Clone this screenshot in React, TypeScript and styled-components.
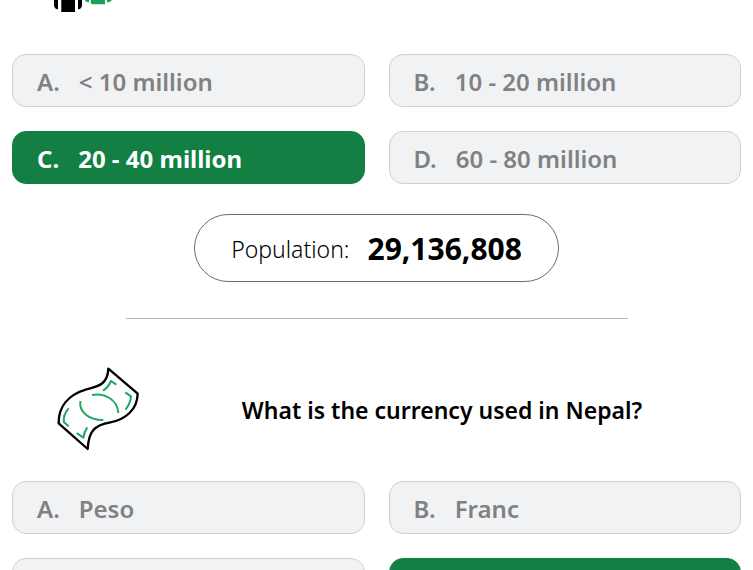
import React from "react";
import styled, { createGlobalStyle } from "styled-components";

const GlobalStyle = createGlobalStyle`
  * { box-sizing: border-box; }
  body {
    margin: 0;
    background: #ffffff;
    color: #000000;
    font-family: "Segoe UI", "Noto Sans", "Open Sans", sans-serif;
  }
`;

const Page = styled.main`
  height: 100vh;
  overflow: hidden;
`;

const Question = styled.section`
  padding: 0 12px;
`;

const PreviousIcon = styled.div`
  display: flex;
  justify-content: center;
  width: 142px;
  height: 12px;
  margin-bottom: 42px;
`;

const QuestionHeader = styled.header`
  display: grid;
  grid-template-columns: 171px 1fr;
  align-items: center;
  padding: 41px 0 21px;
`;

const IconCell = styled.div`
  display: flex;
  justify-content: center;
`;

const Title = styled.h2`
  margin: 0;
  padding-right: 40px;
  font-size: 23px;
  line-height: 32px;
  font-weight: 600;
  text-align: center;
`;

const Options = styled.div`
  display: grid;
  grid-template-columns: 1fr 1fr;
  gap: 24px;
`;

const Option = styled.button<{ $correct?: boolean }>`
  display: flex;
  align-items: center;
  gap: 19px;
  height: 53px;
  padding: 2px 24px 0;
  border: 1px solid ${(p) => (p.$correct ? "#137f43" : "#ced0d3")};
  border-radius: 14px;
  background: ${(p) => (p.$correct ? "#137f43" : "#f1f2f4")};
  color: ${(p) => (p.$correct ? "#ffffff" : "#808183")};
  font-family: inherit;
  font-size: 24px;
  line-height: 32px;
  font-weight: ${(p) => (p.$correct ? 700 : 600)};
  text-align: left;
`;

const Answer = styled.p`
  display: flex;
  align-items: center;
  justify-content: center;
  gap: 18px;
  width: fit-content;
  height: 68px;
  margin: 30px auto 0;
  padding: 2px 36px 0;
  border: 1px solid #5f6f80;
  border-radius: 34px;
`;

const AnswerLabel = styled.span`
  font-size: 23px;
  line-height: 36px;
  font-weight: 300;
`;

const AnswerValue = styled.strong`
  font-size: 30px;
  line-height: 36px;
  font-weight: 700;
`;

const Divider = styled.hr`
  width: calc(100% * 2 / 3);
  height: 1px;
  margin: 36px auto 0;
  border: 0;
  background: #b4b8b9;
`;

type Choice = { letter: string; text?: string; correct?: boolean };

const populationChoices: Choice[] = [
  { letter: "A", text: "< 10 million" },
  { letter: "B", text: "10 - 20 million" },
  { letter: "C", text: "20 - 40 million", correct: true },
  { letter: "D", text: "60 - 80 million" },
];

const currencyChoices: Choice[] = [
  { letter: "A", text: "Peso" },
  { letter: "B", text: "Franc" },
  { letter: "C" },
  { letter: "D", correct: true },
];

function ChoiceGrid({ choices }: { choices: Choice[] }) {
  return (
    <Options>
      {choices.map((c) =>
        c.text ? (
          <Option key={c.letter} type="button" $correct={c.correct}>
            <span>{c.letter}.</span>
            <span>{c.text}</span>
          </Option>
        ) : (
          <Option key={c.letter} type="button" $correct={c.correct} aria-label={c.letter} />
        )
      )}
    </Options>
  );
}

function PeopleIcon() {
  return (
    <svg width="60" height="12" viewBox="0 0 60 12" aria-hidden="true">
      <path d="M1 0H5V9.2Q1.4 9 1 5.5Z M8.3 0H22V12H8.3Z M25 0H29V5.5Q28.6 9 25 9.2Z" fill="#000" />
      <path d="M31.6 0H36V2.4Q33 2.2 31.6 0Z M37.8 0H52V4.2H39Q38 4 37.8 3Z M54 0H59Q57.6 2.2 54 2.4Z" fill="#1ba05a" />
    </svg>
  );
}

function BanknoteIcon() {
  return (
    <svg width="105" height="100" viewBox="0 0 315 300" fill="none" strokeLinecap="round" strokeLinejoin="round" aria-hidden="true">
      <path
        d="M190 26 L278 101 C277 148 243 178 196 187 C148 195 131 214 128 267 L41 190 C40 142 68 105 124 88 C154 80 188 77 190 26Z"
        stroke="#000"
        strokeWidth="7"
      />
      <g stroke="#20a566" strokeWidth="6" strokeLinecap="butt">
        <path d="M141 105 C180 99 218 119 220 159" />
        <path d="M106 123 C102 155 129 180 175 180" />
        <path d="M174 92 Q190 82 198 63 L214 74" />
        <path d="M241 97 L258 109 Q256 132 241 149" />
        <path d="M71 145 Q53 165 57 187 L71 199" />
        <path d="M95 219 L115 233 Q118 214 127 202" />
      </g>
    </svg>
  );
}

export default function App() {
  return (
    <Page>
      <GlobalStyle />
      <Question>
        <PreviousIcon>
          <PeopleIcon />
        </PreviousIcon>
        <ChoiceGrid choices={populationChoices} />
        <Answer>
          <AnswerLabel>Population:</AnswerLabel>
          <AnswerValue>29,136,808</AnswerValue>
        </Answer>
      </Question>
      <Divider />
      <Question>
        <QuestionHeader>
          <IconCell>
            <BanknoteIcon />
          </IconCell>
          <Title>What is the currency used in Nepal?</Title>
        </QuestionHeader>
        <ChoiceGrid choices={currencyChoices} />
      </Question>
    </Page>
  );
}
